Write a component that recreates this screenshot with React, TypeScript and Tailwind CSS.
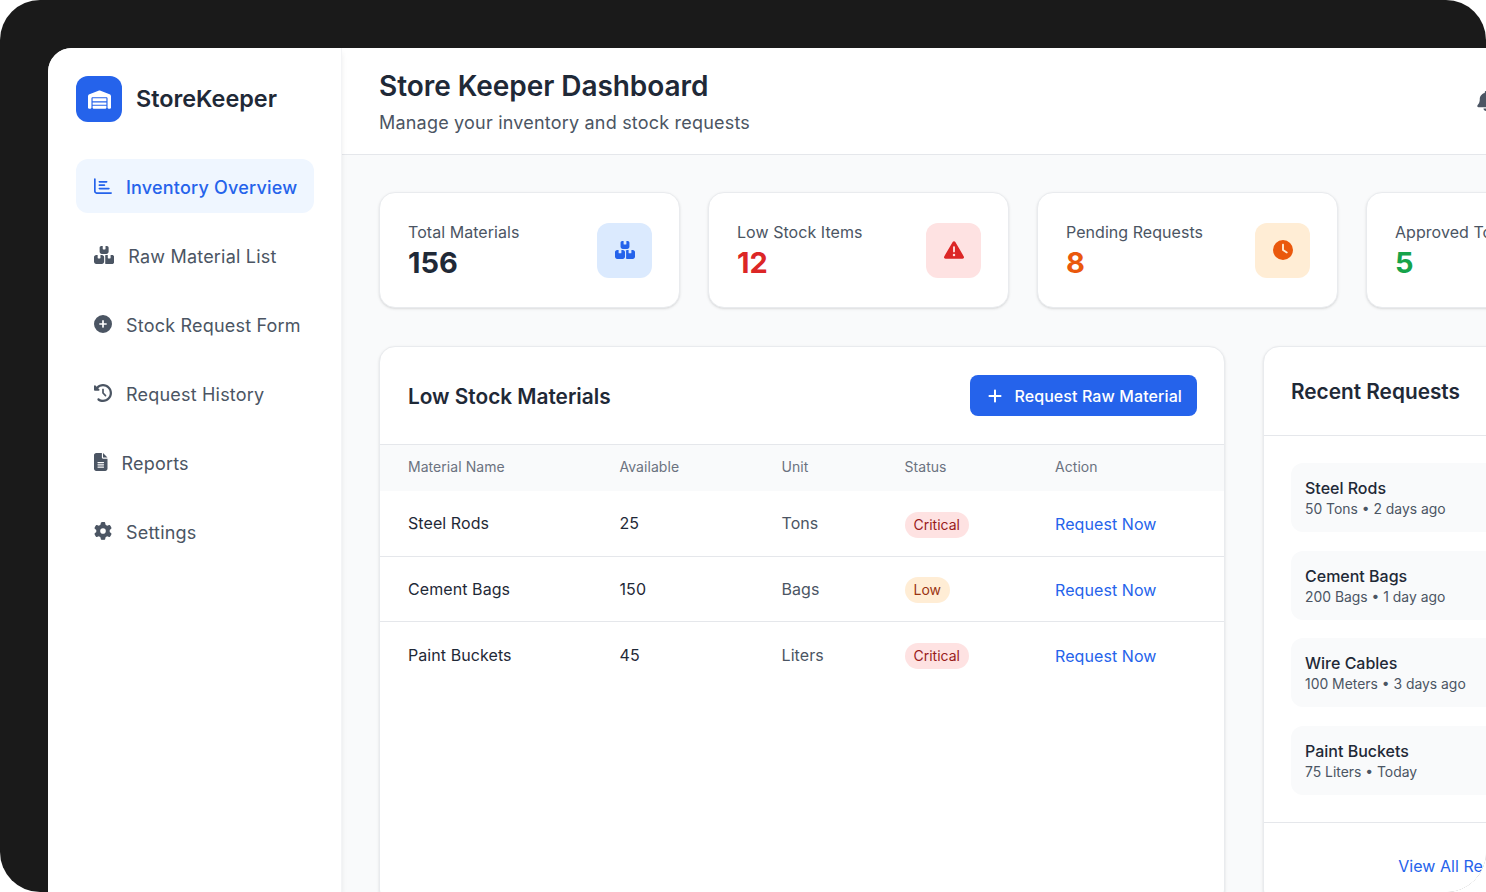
import React from 'react';
import { FaWarehouse, FaRegChartBar, FaBoxesStacked, FaCirclePlus, FaClockRotateLeft, FaFileLines, FaGear, FaBell, FaTriangleExclamation, FaClock, FaPlus, FaCircleCheck } from 'react-icons/fa6';

const navItems = [
  { label: 'Inventory Overview', icon: FaRegChartBar, width: 'w-[18px]', active: true },
  { label: 'Raw Material List', icon: FaBoxesStacked, width: 'w-[20.25px]' },
  { label: 'Stock Request Form', icon: FaCirclePlus, width: 'w-[18px]' },
  { label: 'Request History', icon: FaClockRotateLeft, width: 'w-[18px]' },
  { label: 'Reports', icon: FaFileLines, width: 'w-[13.5px]' },
  { label: 'Settings', icon: FaGear, width: 'w-[18px]' },
];

const stats = [
  { label: 'Total Materials', value: '156', color: 'text-[#1f2937]', box: 'bg-[#dbeafe] text-[#2563eb]', icon: FaBoxesStacked },
  { label: 'Low Stock Items', value: '12', color: 'text-[#dc2626]', box: 'bg-[#fee2e2] text-[#dc2626]', icon: FaTriangleExclamation },
  { label: 'Pending Requests', value: '8', color: 'text-[#ea580c]', box: 'bg-[#ffedd5] text-[#ea580c]', icon: FaClock },
  { label: 'Approved Today', value: '5', color: 'text-[#16a34a]', box: 'bg-[#dcfce7] text-[#16a34a]', icon: FaCircleCheck },
];

const rows = [
  { name: 'Steel Rods', available: '25', unit: 'Tons', status: 'Critical' },
  { name: 'Cement Bags', available: '150', unit: 'Bags', status: 'Low' },
  { name: 'Paint Buckets', available: '45', unit: 'Liters', status: 'Critical' },
];

const requests = [
  { name: 'Steel Rods', meta: '50 Tons • 2 days ago' },
  { name: 'Cement Bags', meta: '200 Bags • 1 day ago' },
  { name: 'Wire Cables', meta: '100 Meters • 3 days ago' },
  { name: 'Paint Buckets', meta: '75 Liters • Today' },
];

const App: React.FC = () => {
  return (
    <div className="h-[892px] w-[1486px] overflow-hidden bg-white font-['Inter',sans-serif]">
      <div className="flex h-full w-full flex-col overflow-hidden rounded-[40px] bg-[#1a1a1a] pl-12 pt-12">
        <div className="flex h-[844px] w-[1658px] shrink-0 overflow-hidden rounded-tl-[24px] bg-white">
          <aside className="z-10 w-[294px] shrink-0 border-r border-[#f3f4f6] bg-white px-7 pt-7 shadow-[0_4px_6px_-1px_rgba(0,0,0,0.1)]">
            <div className="flex items-center gap-[14px]">
              <div className="flex h-[46px] w-[46px] items-center justify-center rounded-xl bg-[#2563eb] text-white">
                <FaWarehouse size={23} />
              </div>
              <span className="text-[23.4px] font-semibold text-[#1f2937]">StoreKeeper</span>
            </div>
            <nav className="mt-[37px] flex flex-col gap-[15px]">
              {navItems.map((item) => (
                <div
                  key={item.label}
                  className={`flex h-[54px] w-[238px] items-center gap-[14px] rounded-xl px-[18px] text-lg tracking-[0.2px] ${
                    item.active ? 'bg-[#eff6ff] font-medium text-[#2563eb]' : 'text-[#4b5563]'
                  }`}
                >
                  <item.icon className={`h-[18px] shrink-0 ${item.width}`} />
                  <span className="whitespace-nowrap pt-[3px]">{item.label}</span>
                </div>
              ))}
            </nav>
          </aside>

          <main className="flex min-w-0 flex-1 flex-col bg-[#f9fafb]">
            <header className="flex h-[107px] shrink-0 items-center justify-between border-b border-[#e5e7eb] bg-white pl-[37px] pr-[210px]">
              <div className="pt-[3px]">
                <h1 className="text-[28px] font-semibold leading-[36px] tracking-[-0.05px] text-[#1f2937]">Store Keeper Dashboard</h1>
                <p className="mt-[5px] text-lg leading-7 tracking-[0.2px] text-[#4b5563]">Manage your inventory and stock requests</p>
              </div>
              <FaBell size={20} className="text-[#4b5563]" />
            </header>

            <div className="flex flex-col gap-[38px] pl-[37px] pt-[37px]">
              <div className="grid w-[1288px] grid-cols-4 gap-7">
                {stats.map((stat) => (
                  <div
                    key={stat.label}
                    className="flex h-[116px] items-center justify-between rounded-2xl border border-[#e9ebee] bg-white pl-7 pr-[27px] shadow-sm"
                  >
                    <div>
                      <p className="whitespace-nowrap text-base leading-6 tracking-[0.05px] text-[#4b5563]">{stat.label}</p>
                      <p className={`pt-[1px] text-[29px] font-bold leading-9 ${stat.color}`}>{stat.value}</p>
                    </div>
                    <div className={`flex h-[55px] w-[55px] items-center justify-center rounded-xl ${stat.box}`}>
                      <stat.icon size={20} />
                    </div>
                  </div>
                ))}
              </div>

              <div className="flex w-[1288px] gap-[38px]">
                <section className="h-[560px] w-[846px] shrink-0 rounded-2xl border border-[#e9ebee] bg-white shadow-sm">
                  <div className="flex h-[98px] items-center justify-between border-b border-[#e5e7eb] pl-7 pr-[27px]">
                    <h2 className="mt-[2px] text-[20.8px] font-semibold text-[#1f2937]">Low Stock Materials</h2>
                    <button className="flex h-[41px] items-center gap-3 rounded-lg bg-[#2563eb] pl-[18px] pr-[15px] text-base font-medium tracking-[0.1px] text-white">
                      <FaPlus className="h-4 w-[14px]" />
                      Request Raw Material
                    </button>
                  </div>
                  <div className="grid h-[46px] grid-cols-[211.5px_162px_123px_150.5px_1fr] items-center bg-[#f9fafb] px-7 pb-[2px] text-sm tracking-[0.05px] text-[#6b7280]">
                    <span>Material Name</span>
                    <span>Available</span>
                    <span>Unit</span>
                    <span>Status</span>
                    <span>Action</span>
                  </div>
                  {rows.map((row, i) => (
                    <div
                      key={row.name}
                      className={`grid h-[65.5px] grid-cols-[211.5px_162px_123px_150.5px_1fr] items-center px-7 text-base tracking-[0.08px] ${
                        i < rows.length - 1 ? 'border-b border-[#e5e7eb]' : ''
                      }`}
                    >
                      <span className="text-[#1f2937]">{row.name}</span>
                      <span className="text-[#1f2937]">{row.available}</span>
                      <span className="text-[#4b5563]">{row.unit}</span>
                      <span className="mt-[3px]">
                        <span
                          className={`inline-block rounded-full px-[9px] py-[3px] text-sm tracking-normal ${
                            row.status === 'Critical' ? 'bg-[#fee2e2] text-[#991b1b]' : 'bg-[#ffedd5] text-[#9a3412]'
                          }`}
                        >
                          {row.status}
                        </span>
                      </span>
                      <span className="mt-[2px] text-[#2563eb]">Request Now</span>
                    </div>
                  ))}
                </section>

                <section className="flex h-[560px] min-w-0 flex-1 flex-col rounded-2xl border border-[#e9ebee] bg-white shadow-sm">
                  <div className="flex h-[89px] shrink-0 items-center border-b border-[#e5e7eb] pl-[27px] pt-[2px]">
                    <h2 className="text-[20.8px] font-semibold text-[#1f2937]">Recent Requests</h2>
                  </div>
                  <div className="flex flex-col gap-[18.67px] pl-[27px] pr-7 pt-[27px]">
                    {requests.map((req) => (
                      <div key={req.name} className="flex h-[69px] flex-col justify-center rounded-xl bg-[#f9fafb] px-[14px]">
                        <p className="text-base font-medium leading-6 text-[#1f2937]">{req.name}</p>
                        <p className="text-[13.9px] leading-[19px] text-[#4b5563]">{req.meta}</p>
                      </div>
                    ))}
                  </div>
                  <div className="mt-[27px] flex h-[87px] items-center justify-center border-t border-[#e5e7eb] pl-[2px] pt-[4px] text-base tracking-[0.05px] text-[#2563eb]">
                    View All Requests
                  </div>
                </section>
              </div>
            </div>
          </main>
        </div>
      </div>
    </div>
  );
};

export default App;
